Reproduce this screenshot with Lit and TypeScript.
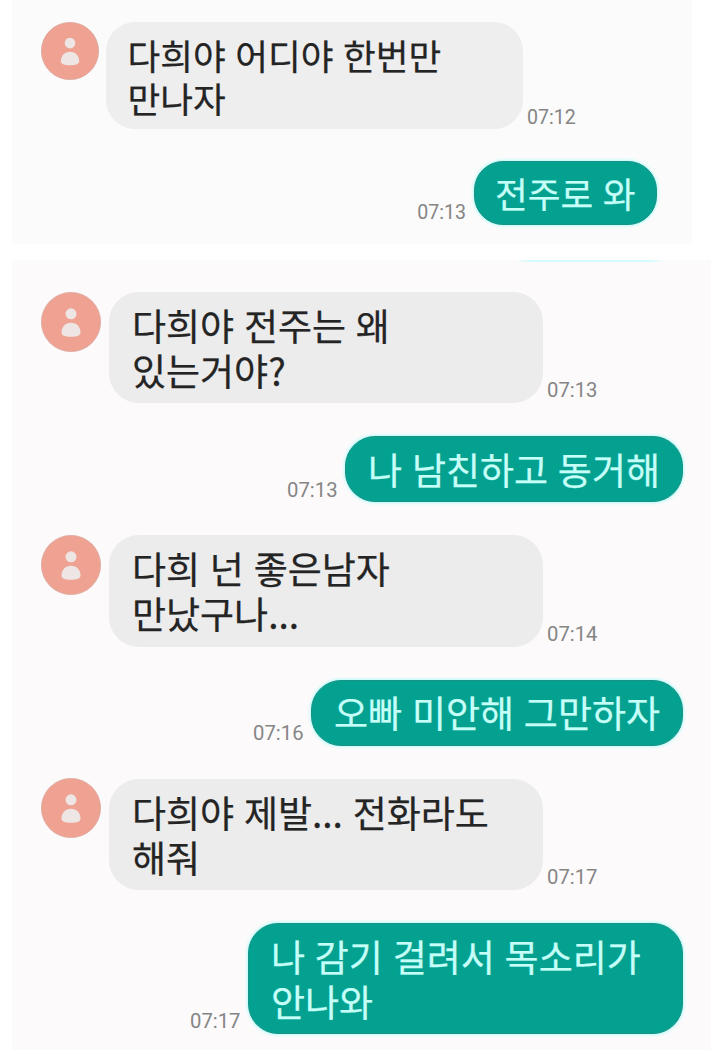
import { LitElement, html, css, svg } from "lit";
import { customElement, property } from "lit/decorators.js";
import { classMap } from "lit/directives/class-map.js";

interface Message {
  from: "them" | "me";
  lines: string[];
  time: string;
}

const firstChat: Message[] = [
  { from: "them", lines: ["다희야 어디야 한번만", "만나자"], time: "07:12" },
  { from: "me", lines: ["전주로 와"], time: "07:13" },
];

const secondChat: Message[] = [
  { from: "them", lines: ["다희야 전주는 왜", "있는거야?"], time: "07:13" },
  { from: "me", lines: ["나 남친하고 동거해"], time: "07:13" },
  { from: "them", lines: ["다희 넌 좋은남자", "만났구나..."], time: "07:14" },
  { from: "me", lines: ["오빠 미안해 그만하자"], time: "07:16" },
  { from: "them", lines: ["다희야 제발... 전화라도", "해줘"], time: "07:17" },
  { from: "me", lines: ["나 감기 걸려서 목소리가", "안나와"], time: "07:17" },
];

@customElement("chat-message")
class ChatMessage extends LitElement {
  @property({ attribute: false }) message!: Message;

  static styles = css`
    :host {
      display: block;
    }
    .row {
      display: flex;
      align-items: flex-end;
    }
    .me {
      justify-content: flex-end;
    }
    .avatar {
      flex: none;
      align-self: flex-start;
      width: var(--avatar);
      height: var(--avatar);
      margin: var(--avatar-top) var(--avatar-gap) 0 0;
      display: block;
    }
    .bubble {
      box-sizing: border-box;
      border-radius: var(--radius);
      padding: calc(var(--pad-y) + 0.5px) var(--pad-x) calc(var(--pad-y) - 0.5px);
      font-size: var(--text);
      line-height: var(--line);
      word-spacing: var(--word);
      white-space: nowrap;
      -webkit-text-stroke: 0.25px currentColor;
    }
    .them .bubble {
      width: var(--bubble);
      background: var(--grey);
      color: #242424;
    }
    .me .bubble {
      background: #04a191;
      color: #c5fff8;
      border: 1px solid #1a9387;
      padding: calc(var(--pad-y) - 1px) calc(var(--pad-x) - 1px);
      box-shadow: 0 0 3px 1px #b4fcf8;
    }
    .wide .bubble {
      width: calc(var(--bubble) + 1px);
    }
    .line {
      display: block;
    }
    .time {
      font-family: Roboto, sans-serif;
      font-size: var(--time);
      line-height: 24px;
      color: #858585;
      margin: 0 0 var(--time-lift) 4px;
    }
    .me .time {
      margin: 0 7.5px var(--time-lift) 0;
    }
  `;

  render() {
    const m = this.message;
    const mine = m.from === "me";
    const wide = mine && m.lines.length > 1;
    const bubble = html`<div class="bubble">
      ${m.lines.map((l) => html`<span class="line">${l}</span>`)}
    </div>`;
    const time = html`<span class="time">${m.time}</span>`;
    return html`<div class=${classMap({ row: true, me: mine, them: !mine, wide })}>
      ${mine
        ? html`${time}${bubble}`
        : html`<svg class="avatar" viewBox="0 0 60 60">
              ${svg`<circle cx="30" cy="30" r="29.6" fill="#f0a292" stroke="#d9a79e" stroke-width="0.8"/>
              <circle cx="30" cy="21.800" r="5.500" fill="#eee6e4"/>
              <path d="M20.500 40.500C20.500 35 24.500 30.800 30 30.800s9.500 4.200 9.500 9.700c0 3-3.500 4.200-9.500 4.200s-9.500-1.200-9.500-4.200z" fill="#eee6e4"/>`}
            </svg>
            ${bubble}${time}`}
    </div>`;
  }
}

@customElement("app-root")
class AppRoot extends LitElement {
  static styles = css`
    :host {
      display: flex;
      flex-direction: column;
      gap: 16px;
      box-sizing: border-box;
      height: 1050px;
      padding-left: 12px;
      overflow: hidden;
      background: #fff;
      font-family: "Noto Sans CJK KR", sans-serif;
    }
    .panel {
      box-sizing: border-box;
      display: flex;
      flex-direction: column;
    }
    .first {
      width: 680px;
      height: 244px;
      padding: 22px 35px 0 29px;
      gap: 32px;
      background: #fbfbfb;
      --avatar: 58px;
      --avatar-top: 0px;
      --avatar-gap: 7px;
      --bubble: 417px;
      --radius: 29px;
      --pad-y: 10px;
      --pad-x: 21.5px;
      --text: 35.6px;
      --line: 43.5px;
      --word: 1.6px;
      --time: 19.6px;
      --time-lift: -0.5px;
      --grey: #eeeeee;
    }
    .second {
      flex: 1;
      padding: 0 28px 0 29px;
      gap: 33px;
      background: #fcfafb;
      --avatar: 60px;
      --avatar-top: -0.5px;
      --avatar-gap: 8px;
      --bubble: 434px;
      --radius: 30px;
      --pad-y: 10.6px;
      --pad-x: 23px;
      --text: 37px;
      --line: 45px;
      --word: 1.5px;
      --time: 20.3px;
      --time-lift: 0.8px;
      --grey: #ececec;
    }
    .edge {
      flex: none;
      width: 150px;
      height: 2px;
      margin: 0 18px -3px auto;
      background: linear-gradient(90deg, transparent, #d4fbfb 10%, #d4fbfb 90%, transparent);
    }
  `;

  render() {
    return html`
      <section class="panel first">
        ${firstChat.map((m) => html`<chat-message .message=${m}></chat-message>`)}
      </section>
      <section class="panel second">
        <div class="edge"></div>
        ${secondChat.map((m) => html`<chat-message .message=${m}></chat-message>`)}
      </section>
    `;
  }
}
